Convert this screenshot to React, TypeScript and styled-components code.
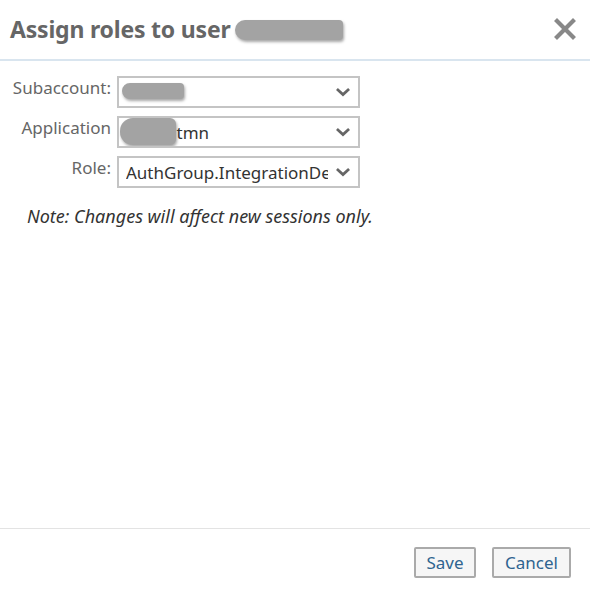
import React from "react";
import styled, { createGlobalStyle } from "styled-components";

const Global = createGlobalStyle`
  html, body { margin: 0; padding: 0; background: #fff; }
  body { font-family: "Noto Sans", "Open Sans", Arial, sans-serif; }
  * { box-sizing: border-box; }
`;

const Dialog = styled.div`
  width: 590px;
  height: 594px;
  display: flex;
  flex-direction: column;
  background: #fff;
`;

const Header = styled.div`
  height: 61px;
  flex: none;
  display: flex;
  align-items: center;
  justify-content: space-between;
  padding: 0 13px 2px 10px;
  border-bottom: 2px solid #d9e5ef;
`;

const Title = styled.h1`
  margin: 0;
  font-size: 23px;
  font-weight: 700;
  color: #666;
  display: flex;
  align-items: center;
  letter-spacing: -0.2px;
`;

const Redact = styled.span<{ $w: number; $h: number }>`
  display: inline-block;
  width: ${(p) => p.$w}px;
  height: ${(p) => p.$h}px;
  background: #a3a3a3;
  border-radius: ${(p) => p.$h / 2}px 4px 4px ${(p) => p.$h / 2}px;
  box-shadow: 1px 2px 3px rgba(0, 0, 0, 0.35);
`;

const CloseBtn = styled.button`
  border: none;
  background: none;
  padding: 0;
  width: 24px;
  height: 24px;
  display: flex;
  align-items: center;
  justify-content: center;
  cursor: pointer;
`;

const Content = styled.div`
  flex: 1;
  padding: 15px 0 0 0;
`;

const Form = styled.div`
  display: grid;
  grid-template-columns: 111px 243px;
  column-gap: 6px;
  row-gap: 8px;
`;

const Label = styled.label`
  text-align: right;
  font-size: 17px;
  color: #666;
  padding-top: 0px;
  line-height: 24px;
`;

const Select = styled.div`
  position: relative;
  height: 32px;
  border: 2px solid #c4c4c4;
  background: #fff;
  display: flex;
  align-items: center;
  padding: 0 30px 0 7px;
  font-size: 17px;
  color: #333;
  overflow: hidden;
  white-space: nowrap;
`;

const SelectText = styled.span`
  overflow: hidden;
  display: flex;
  align-items: center;
`;

const Chevron = styled.span`
  position: absolute;
  right: 8px;
  top: 50%;
  transform: translateY(-45%);
  display: flex;
`;

const Overlay = styled.span<{ $left: number; $top: number }>`
  position: absolute;
  left: ${(p) => p.$left}px;
  top: ${(p) => p.$top}px;
  display: flex;
`;

const Note = styled.p`
  margin: 16px 0 0 27px;
  font-size: 18px;
  font-style: italic;
  color: #333;
`;

const Footer = styled.div`
  height: 66px;
  flex: none;
  border-top: 1px solid #e3e3e3;
  display: flex;
  justify-content: flex-end;
  align-items: flex-start;
  gap: 16px;
  padding: 18px 19px 0 0;
`;

const Button = styled.button<{ $w: number }>`
  width: ${(p) => p.$w}px;
  height: 31px;
  background: #f6f6f6;
  border: 2px solid #aaa;
  border-radius: 2px;
  font-family: "Noto Sans", "Open Sans", Arial, sans-serif;
  font-size: 17px;
  color: #2f6490;
  padding: 0;
  line-height: 25px;
  cursor: pointer;
`;

const ChevronIcon = () => (
  <svg width="14" height="10" viewBox="0 0 14 10">
    <path d="M2 2.5 L7 7 L12 2.5" fill="none" stroke="#666" strokeWidth="2.8" strokeLinecap="square" />
  </svg>
);

const CloseIcon = () => (
  <svg width="22" height="22" viewBox="0 0 22 22">
    <path d="M3 3 L19 19 M19 3 L3 19" stroke="#888" strokeWidth="4.2" strokeLinecap="square" />
  </svg>
);

export default function App() {
  return (
    <>
      <Global />
      <Dialog>
        <Header>
          <Title>
            Assign roles to user
            <Redact $w={108} $h={20} style={{ marginLeft: 4, marginTop: 2 }} />
          </Title>
          <CloseBtn aria-label="Close">
            <CloseIcon />
          </CloseBtn>
        </Header>
        <Content>
          <Form>
            <Label>Subaccount:</Label>
            <Select>
              <Overlay $left={3} $top={5}>
                <Redact $w={62} $h={16} />
              </Overlay>
              <Chevron>
                <ChevronIcon />
              </Chevron>
            </Select>
            <Label>Application</Label>
            <Select>
              <SelectText style={{ paddingLeft: 46 }}>:tmn</SelectText>
              <Overlay $left={1} $top={0}>
                <Redact $w={56} $h={27} style={{ borderRadius: "13px 6px 6px 13px" }} />
              </Overlay>
              <Chevron>
                <ChevronIcon />
              </Chevron>
            </Select>
            <Label>Role:</Label>
            <Select>
              <SelectText>AuthGroup.IntegrationDeveloper</SelectText>
              <Chevron>
                <ChevronIcon />
              </Chevron>
            </Select>
          </Form>
          <Note>Note: Changes will affect new sessions only.</Note>
        </Content>
        <Footer>
          <Button $w={62}>Save</Button>
          <Button $w={79}>Cancel</Button>
        </Footer>
      </Dialog>
    </>
  );
}
